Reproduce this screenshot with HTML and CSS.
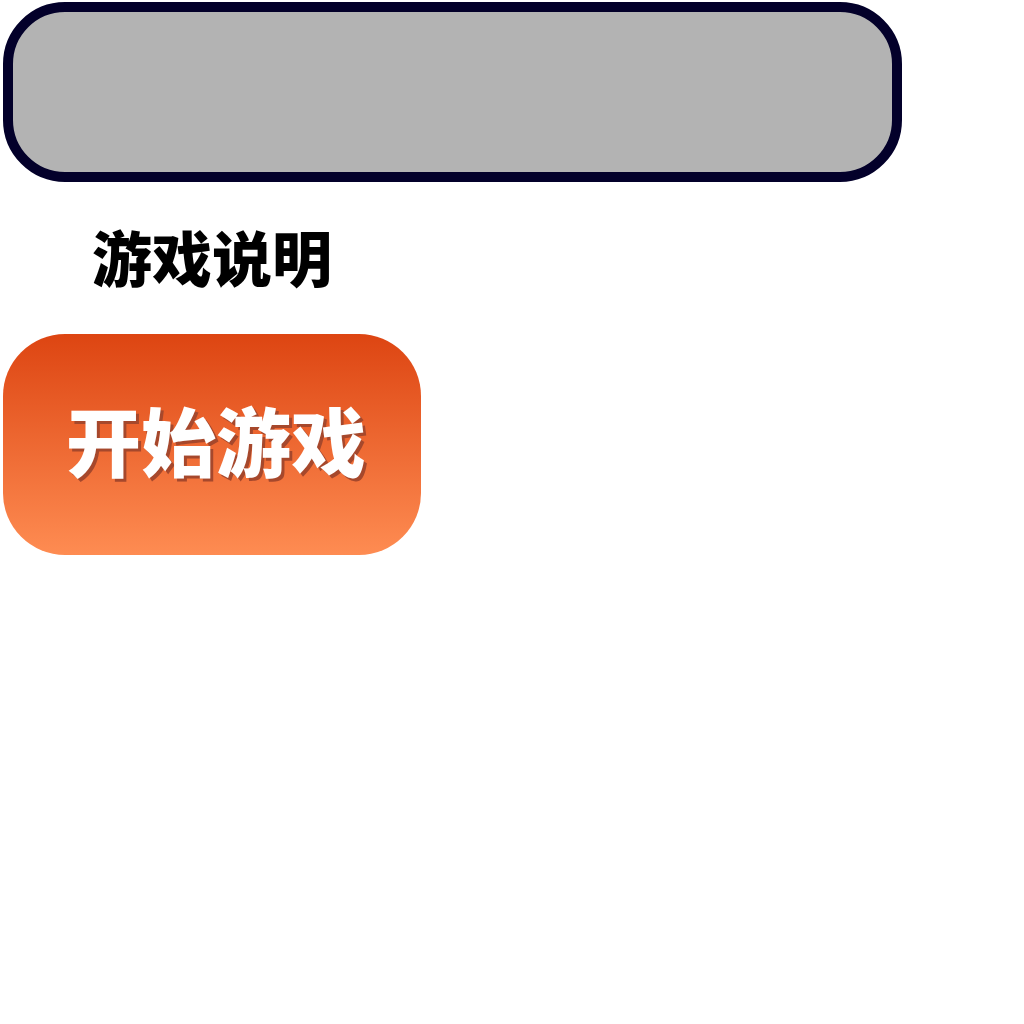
FILE: index.html
```html
<!DOCTYPE html>
<html lang="zh">
<head>
<meta charset="utf-8">
<link rel="stylesheet" href="styles.css">
</head>
<body>
<div class="page">
  <div class="panel"></div>
  <div class="help">游戏说明</div>
  <button class="start">开始游戏</button>
</div>
</body>
</html>
```
FILE: styles.css
```css
html, body {
  margin: 0;
  padding: 0;
  background: #ffffff;
}
.page {
  display: flex;
  flex-direction: column;
  align-items: flex-start;
  padding: 2px 0 0 3px;
  font-family: "Noto Sans CJK SC", "Noto Sans", sans-serif;
}
.panel {
  box-sizing: border-box;
  width: 899px;
  height: 180px;
  background: #b3b3b3;
  border: 10px solid #03002a;
  border-radius: 62px;
}
.help {
  margin: 40px 0 0 89px;
  font-size: 60px;
  line-height: 68px;
  font-weight: 900;
  color: #000;
}
.start {
  box-sizing: border-box;
  margin-top: 44px;
  width: 418px;
  height: 221px;
  border: none;
  border-radius: 62px;
  background: linear-gradient(to bottom, #dd4512, #fe8c52);
  font-family: "Noto Sans CJK SC", "Noto Sans", sans-serif;
  font-size: 75px;
  font-weight: 900;
  color: #ffffff;
  text-shadow: 3px 3px 0 #a6482c;
  padding: 0 0 12px 8px;
}
```
